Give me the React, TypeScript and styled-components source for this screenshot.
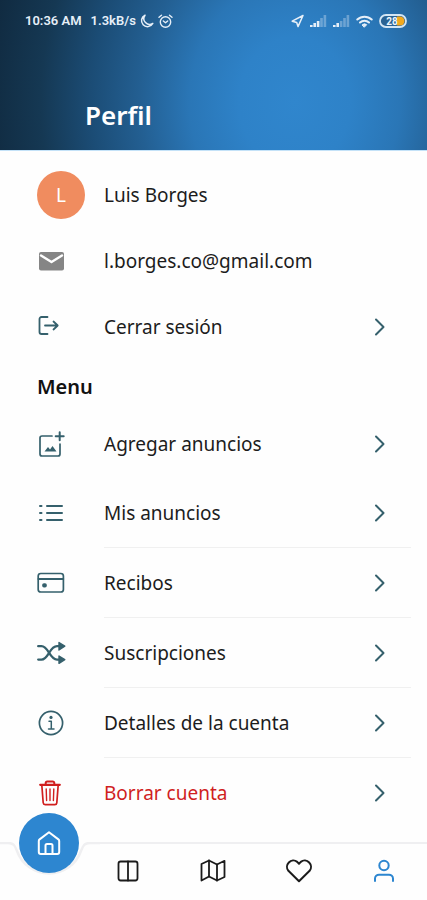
import React from "react";
import styled, { createGlobalStyle } from "styled-components";

const teal = "#35606c";
const danger = "#d01f1f";
const brand = "#2d86d0";

const GlobalStyle = createGlobalStyle`
  *, *::before, *::after { box-sizing: border-box; }
  body {
    margin: 0;
    background: #fefefe;
    color: #1c1c1c;
    font-family: "Noto Sans", "Open Sans", sans-serif;
  }
  button { font: inherit; color: inherit; background: none; border: 0; padding: 0; cursor: pointer; }
  svg { display: block; flex: none; }
`;

const Page = styled.div`
  min-height: 100vh;
  display: flex;
  flex-direction: column;
`;

const Header = styled.header`
  height: 151px;
  display: flex;
  flex-direction: column;
  justify-content: space-between;
  padding: 12px 20px 18px 25px;
  color: #fff;
  border-bottom: 1px solid #c4e2f8;
  background: radial-gradient(
    ellipse 310px 360px at 69% 68%,
    #3086cd 0%,
    #2e82c8 18%,
    #2a76b6 34%,
    #235f92 50%,
    #1b4c75 66%,
    #153853 82%,
    #102a40 100%
  );
`;

const StatusBar = styled.div`
  display: flex;
  align-items: center;
  justify-content: space-between;
  font: 600 13px/18px Roboto, sans-serif;
  color: #e6eff8;
`;

const StatusGroup = styled.div<{ $gap: number }>`
  display: flex;
  align-items: center;
  gap: ${(p) => p.$gap}px;
`;

const Speed = styled.span`
  margin-left: 5px;
`;

const Title = styled.h1`
  margin: 0 0 0 60px;
  font-size: 26px;
  line-height: 34px;
  font-weight: 600;
`;

const Main = styled.main`
  flex: 1;
  padding: 11px 16px 13px 37px;
`;

const List = styled.ul`
  list-style: none;
  margin: 0;
  padding: 0;
`;

const Item = styled.li<{ $height: number }>`
  display: flex;
  height: ${(p) => p.$height}px;
`;

const rowLayout = `
  flex: 1;
  display: grid;
  grid-template-columns: 67px 1fr 20px;
  align-items: stretch;
  text-align: left;
`;

const Row = styled.div`
  ${rowLayout}
`;

const RowButton = styled.button`
  ${rowLayout}
`;

const IconCell = styled.span`
  display: flex;
  align-items: center;
`;

const Body = styled.span<{ $line?: boolean; $danger?: boolean }>`
  grid-column: 2 / -1;
  display: flex;
  align-items: center;
  justify-content: space-between;
  padding-right: 25px;
  font-size: 19px;
  line-height: 24px;
  color: ${(p) => (p.$danger ? danger : "inherit")};
  border-bottom: 1px solid ${(p) => (p.$line ? "#f0f0f0" : "transparent")};
`;

const Avatar = styled.span`
  width: 48px;
  height: 48px;
  border-radius: 50%;
  display: grid;
  place-items: center;
  background: #f08c5f;
  color: #fff;
  font-size: 19px;
`;

const SectionTitle = styled.h2`
  margin: 0;
  padding: 15px 0 11px;
  font-size: 20px;
  line-height: 24px;
  font-weight: 600;
  color: #111;
`;

const Nav = styled.nav`
  position: sticky;
  bottom: 0;
  height: 58px;
  padding-bottom: 3px;
  display: grid;
  grid-template-columns: repeat(5, 1fr);
  background: #fefefe;
  border-top: 2px solid #efeff1;
`;

const NavButton = styled.button<{ $active?: boolean }>`
  display: grid;
  place-items: center;
  color: ${(p) => (p.$active ? brand : "#1b1b1b")};
`;

const Notch = styled.svg`
  position: absolute;
  left: 0;
  top: -2px;
`;

const HomeButton = styled.button`
  position: absolute;
  left: 19px;
  top: -31px;
  width: 60px;
  height: 60px;
  border-radius: 50%;
  display: grid;
  place-items: center;
  background: ${brand};
  color: #fff;
`;

type IconProps = {
  w: number;
  h: number;
  color?: string;
  stroke?: number;
  children: React.ReactNode;
};

const Icon = ({ w, h, color = "currentColor", stroke = 2, children }: IconProps) => (
  <svg
    width={w}
    height={h}
    viewBox={`0 0 ${w} ${h}`}
    fill="none"
    stroke={color}
    strokeWidth={stroke}
    strokeLinecap="round"
    strokeLinejoin="round"
    aria-hidden="true"
  >
    {children}
  </svg>
);

const Chevron = () => (
  <Icon w={12} h={20} color={teal}>
    <path d="M2 2.5 9.5 10 2 17.5" />
  </Icon>
);

const Mail = () => (
  <Icon w={28} h={20} stroke={0}>
    <rect x="2" y="1" width="25" height="18.5" rx="2" fill="#858585" />
    <path d="M4 4.5 14.5 11 25 4.5" stroke="#fff" strokeWidth="2.4" />
  </Icon>
);

const Logout = () => (
  <Icon w={24} h={24} color={teal} stroke={1.8}>
    <path d="M10.5 2H4.5A2 2 0 0 0 2.5 4V17A2 2 0 0 0 4.5 19H10.5" />
    <path d="M8 10.5H20.5M16.5 6.5 20.7 10.5 16.5 14.5" />
  </Icon>
);

const AddImage = () => (
  <Icon w={28} h={28} color={teal} stroke={1.7}>
    <path d="M15 6H5A2 2 0 0 0 3 8V24A2 2 0 0 0 5 26H21A2 2 0 0 0 23 24V14" />
    <path d="M22.7 2.2V10.2M18.7 6.2H26.7" strokeWidth="2" />
    <path d="M7.500 21.500 11 17 13 19.500 15.500 16 19.500 21.500Z" fill={teal} stroke="none" />
  </Icon>
);

const ListIcon = () => (
  <Icon w={28} h={20} color={teal}>
    <path d="M10 3H25M10 10H25M10 17H25" />
    <path d="M3 3H4.5M3 10H4.5M3 17H4.5" />
  </Icon>
);

const Card = () => (
  <Icon w={28} h={22} color={teal} stroke={1.7}>
    <rect x="1.2" y="1.5" width="25.2" height="18.5" rx="2.6" />
    <path d="M1.5 7H26.2" strokeWidth="2" />
    <rect x="6" y="12" width="3" height="2.600" rx="1" fill={teal} />
  </Icon>
);

const Shuffle = () => (
  <Icon w={30} h={24} color={teal} stroke={2.300}>
    <path d="M1.200 5.200H4.500C11.500 5.200 12.500 18.600 20 18.600H22M1.200 18.600H4.500C11.500 18.600 12.500 5.200 20 5.200H22" />
    <path d="M22 1.500 27.800 5.200 22 9ZM22 15 27.800 18.600 22 22.300Z" fill={teal} strokeWidth="1.400" />
  </Icon>
);

const Info = () => (
  <Icon w={28} h={26} color={teal} stroke={1.7}>
    <circle cx="14" cy="13" r="11.6" />
    <path d="M12 11.3H14.3V18.8M11.5 18.9H17" strokeWidth="1.5" />
    <circle cx="14" cy="7.4" r="1.6" fill={teal} stroke="none" />
  </Icon>
);

const Trash = () => (
  <Icon w={27} h={28} color={danger} stroke={1.7}>
    <path d="M3.2 5.8H22.8" strokeWidth="2.2" />
    <path d="M8.7 5V4A1.6 1.6 0 0 1 10.3 2.4H15.7A1.6 1.6 0 0 1 17.3 4V5" strokeWidth="2" />
    <path d="M4.8 6 6.2 23.8A2 2 0 0 0 8.2 25.6H17.8A2 2 0 0 0 19.8 23.8L21.2 6" />
    <path d="M9.2 10 9.6 21.5M13 10V21.5M16.8 10 16.4 21.5" strokeWidth="1.4" />
  </Icon>
);

const Home = () => (
  <Icon w={26} h={26} stroke={2}>
    <path d="M2.800 11A2 2 0 0 1 3.600 9.400L13 2.300 22.400 9.400A2 2 0 0 1 23.200 11V22A2 2 0 0 1 21.200 24H4.800A2 2 0 0 1 2.800 22Z" />
    <path d="M9.500 24V15.500A1.500 1.500 0 0 1 11 14H15A1.500 1.500 0 0 1 16.500 15.500V24" />
  </Icon>
);

const Columns = () => (
  <Icon w={22} h={22} stroke={1.8}>
    <rect x="1.500" y="1.500" width="19" height="19" rx="2.200" />
    <path d="M11 1.500V20.500" />
  </Icon>
);

const MapIcon = () => (
  <Icon w={26} h={24} stroke={1.8}>
    <path d="M1.500 5V21.500L9 17.500 17 21.500 24.500 18V1.800L17 5.500 9 1.500Z" />
    <path d="M9 1.500V17.500M17 5.500V21.500" />
  </Icon>
);

const Heart = () => (
  <Icon w={28} h={24} stroke={2}>
    <path d="M14 22.300 3.400 11.800A6.300 6.300 0 0 1 12.200 2.900L14 4.700 15.800 2.900A6.300 6.300 0 0 1 24.600 11.800Z" />
  </Icon>
);

const User = () => (
  <Icon w={22} h={24} stroke={2}>
    <circle cx="11" cy="6.500" r="4.700" />
    <path d="M2 22V19.500A4 4 0 0 1 6 15.700H16A4 4 0 0 1 20 19.500V22" />
  </Icon>
);

const Moon = () => (
  <Icon w={14} h={14} stroke={1.5}>
    <path d="M5 1.200A6 6 0 1 0 12.800 9.500 5.800 5.800 0 0 1 5 1.200Z" />
  </Icon>
);

const Alarm = () => (
  <Icon w={15} h={15} stroke={1.4}>
    <circle cx="7.500" cy="8" r="5.200" />
    <path d="M5.300 7 7.500 8.800 9.700 7M1 3.300 3.500 1.200M14 3.300 11.500 1.200" />
  </Icon>
);

const Location = () => (
  <Icon w={13} h={14} stroke={1.500}>
    <path d="M12 1.500 1.200 7.200 5.700 8.500 7 12.600Z" />
  </Icon>
);

const Signal = ({ level }: { level: number }) => (
  <Icon w={17} h={13} stroke={0}>
    {[2, 4, 6, 9, 12].map((h, i) => (
      <rect
        key={h}
        x={i * 3.4}
        y={12 - h}
        width="2.600"
        height={h}
        fill="#e6eff8"
        opacity={i < level ? 1 : 0.35}
      />
    ))}
  </Icon>
);

const Wifi = () => (
  <Icon w={17} h={13} stroke={2}>
    <path d="M1.300 4.500A10.500 10.500 0 0 1 15.700 4.500M4 7.500A6.500 6.500 0 0 1 13 7.500" />
    <path d="M6.300 9.700A3.400 3.400 0 0 1 10.700 9.700L8.500 12Z" fill="currentColor" strokeWidth="1" />
  </Icon>
);

const Battery = () => (
  <svg width="28" height="14" viewBox="0 0 28 14" role="img" aria-label="28">
    <rect x="1" y="1" width="26" height="12" rx="6" fill="#2a6394" stroke="#d4e6f4" strokeWidth="1.800" />
    <path d="M18 2.500H21A4.500 4.500 0 0 1 21 11.500H18Z" fill="#f2a91e" />
    <text x="13" y="10.500" textAnchor="middle" fontFamily="Roboto, sans-serif" fontSize="10" fontWeight="700" fill="#eef6fc">
      28
    </text>
  </svg>
);

type Entry = { label: string; icon: React.ReactNode; height: number; line?: boolean; danger?: boolean };

const entries: Entry[] = [
  { label: "Agregar anuncios", icon: <AddImage />, height: 68 },
  { label: "Mis anuncios", icon: <ListIcon />, height: 70, line: true },
  { label: "Recibos", icon: <Card />, height: 70, line: true },
  { label: "Suscripciones", icon: <Shuffle />, height: 70, line: true },
  { label: "Detalles de la cuenta", icon: <Info />, height: 70, line: true },
  { label: "Borrar cuenta", icon: <Trash />, height: 70, danger: true },
];

const MenuRow = ({ label, icon, height, line, danger: isDanger }: Entry) => (
  <Item $height={height}>
    <RowButton type="button">
      <IconCell>{icon}</IconCell>
      <Body $line={line} $danger={isDanger}>
        {label}
        <Chevron />
      </Body>
    </RowButton>
  </Item>
);

export default function App() {
  return (
    <Page>
      <GlobalStyle />
      <Header>
        <StatusBar>
          <StatusGroup $gap={4}>
            <span>10:36 AM</span>
            <Speed>1.3kB/s</Speed>
            <Moon />
            <Alarm />
          </StatusGroup>
          <StatusGroup $gap={6}>
            <Location />
            <Signal level={3} />
            <Signal level={2} />
            <Wifi />
            <Battery />
          </StatusGroup>
        </StatusBar>
        <Title>Perfil</Title>
      </Header>

      <Main>
        <List>
          <Item $height={66}>
            <Row>
              <IconCell>
                <Avatar aria-hidden="true">L</Avatar>
              </IconCell>
              <Body>Luis Borges</Body>
            </Row>
          </Item>
          <Item $height={66}>
            <Row>
              <IconCell>
                <Mail />
              </IconCell>
              <Body>l.borges.co@gmail.com</Body>
            </Row>
          </Item>
          <MenuRow label="Cerrar sesión" icon={<Logout />} height={66} />
        </List>
        <SectionTitle>Menu</SectionTitle>
        <List>
          {entries.map((entry) => (
            <MenuRow key={entry.label} {...entry} />
          ))}
        </List>
      </Main>

      <Nav aria-label="Principal">
        <Notch width="100" height="38" viewBox="0 0 100 38" aria-hidden="true">
          <path d="M0 0H100V2H88C83 2 82 5 81 9A33 33 0 0 1 17 9C16 5 15 2 10 2H0Z" fill="#fefefe" />
          <path
            d="M0 1H8C14 1 15 4 17 9A34 34 0 0 0 81 9C83 4 84 1 90 1H100"
            fill="none"
            stroke="#efeff1"
            strokeWidth="2.500"
          />
        </Notch>
        <HomeButton type="button" aria-label="Inicio">
          <Home />
        </HomeButton>
        <span />
        <NavButton type="button" aria-label="Columnas">
          <Columns />
        </NavButton>
        <NavButton type="button" aria-label="Mapa">
          <MapIcon />
        </NavButton>
        <NavButton type="button" aria-label="Favoritos">
          <Heart />
        </NavButton>
        <NavButton type="button" aria-label="Perfil" $active>
          <User />
        </NavButton>
      </Nav>
    </Page>
  );
}
